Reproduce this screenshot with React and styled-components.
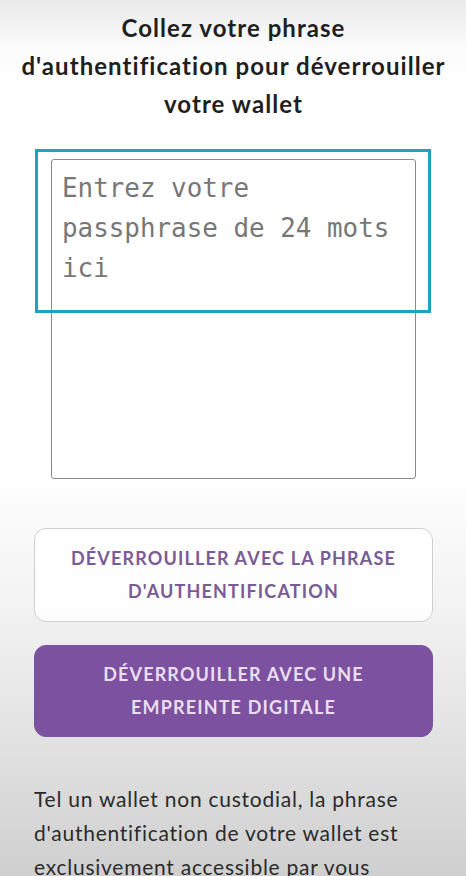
import React from "react";
import styled, { createGlobalStyle } from "styled-components";

const GlobalStyle = createGlobalStyle`
  html, body {
    margin: 0;
    padding: 0;
  }
  body {
    font-family: "Lato", "Noto Sans", sans-serif;
  }
`;

const Page = styled.div`
  width: 466px;
  height: 876px;
  overflow: hidden;
  box-sizing: border-box;
  padding: 9px 33px 0 34px;
  background: linear-gradient(
    to bottom,
    #e9e9e9 0px,
    #fbfbfb 45px,
    #ffffff 90px,
    #ffffff 470px,
    #f3f3f3 600px,
    #e2e2e2 740px,
    #cfcfcf 876px
  );
  display: flex;
  flex-direction: column;
`;

const Title = styled.h1`
  margin: 0 -20px;
  font-family: "Lato", sans-serif;
  font-weight: 700;
  font-size: 24px;
  line-height: 38px;
  letter-spacing: 1.05px;
  color: #1f1f1f;
  text-align: center;
`;

const FieldWrap = styled.div`
  position: relative;
  margin: 36px 17px 0 17px;
`;

const PhraseInput = styled.textarea`
  display: block;
  width: 100%;
  height: 320px;
  box-sizing: border-box;
  resize: none;
  border: 1.5px solid #8a8a8a;
  border-radius: 3px;
  background: #ffffff;
  padding: 8px 10px;
  font-family: "DejaVu Sans Mono", "Liberation Mono", monospace;
  font-size: 25.9px;
  line-height: 40px;
  color: #333;
  outline: none;

  &::placeholder {
    color: #777;
  }
`;

const Highlight = styled.div`
  position: absolute;
  left: -16px;
  top: -10px;
  width: 396px;
  height: 164px;
  box-sizing: border-box;
  border: 3px solid #1ba4c2;
  pointer-events: none;
`;

const Actions = styled.div`
  display: flex;
  flex-direction: column;
  gap: 23px;
  margin-top: 49px;
`;

const ActionButton = styled.button`
  height: ${(p) => (p.$primary ? "92px" : "94px")};
  box-sizing: border-box;
  border-radius: 12px;
  border: 1.5px solid ${(p) => (p.$primary ? "#7c519f" : "#cfcfcf")};
  background: ${(p) => (p.$primary ? "#7c519f" : "rgba(255,255,255,0.85)")};
  color: ${(p) => (p.$primary ? "#eadff0" : "#7a5b96")};
  font-family: "Lato", sans-serif;
  font-weight: 700;
  font-size: 18px;
  letter-spacing: 1.15px;
  line-height: 33px;
  text-transform: uppercase;
  padding: 0 20px;
  cursor: pointer;
`;

const Note = styled.p`
  margin: 45px 0 0 0;
  font-family: "Lato", sans-serif;
  font-size: 21px;
  letter-spacing: 0.75px;
  line-height: 34px;
  color: #2b2b2b;
`;

export default function App() {
  return (
    <>
      <GlobalStyle />
      <Page>
        <Title>
          Collez votre phrase
          <br />
          d'authentification pour déverrouiller
          <br />
          votre wallet
        </Title>
        <FieldWrap>
          <PhraseInput placeholder="Entrez votre passphrase de 24 mots ici" />
          <Highlight />
        </FieldWrap>
        <Actions>
          <ActionButton>
            Déverrouiller avec la phrase
            <br />
            d'authentification
          </ActionButton>
          <ActionButton $primary>
            Déverrouiller avec une
            <br />
            empreinte digitale
          </ActionButton>
        </Actions>
        <Note>
          Tel un wallet non custodial, la phrase d'authentification de votre
          wallet est exclusivement accessible par vous
        </Note>
      </Page>
    </>
  );
}
